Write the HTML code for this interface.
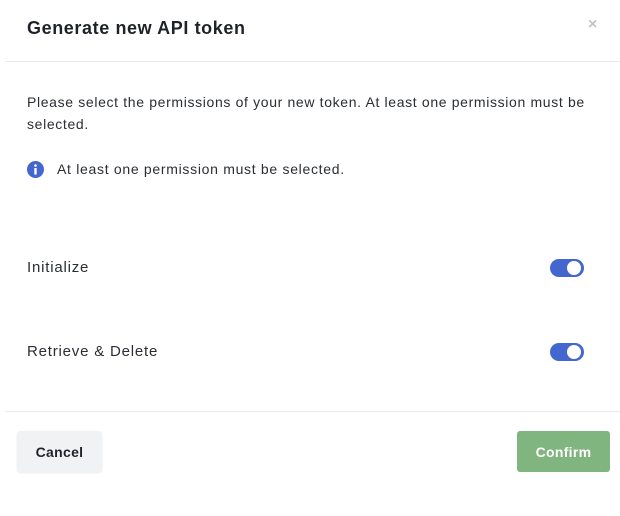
<!DOCTYPE html>
<html><head><style>
body{margin:0;width:620px;height:516px;background:#fff;font-family:"Liberation Sans",sans-serif;color:#212529;position:relative;overflow:hidden}
.a{position:absolute}
.t{left:27px;top:18px;font-size:18px;font-weight:bold;color:#1f2329;letter-spacing:0.6px}
.x{left:588px;top:16px;font-size:16px;color:#c4c4c4;font-weight:bold}
.hr{left:5px;right:0;height:1px;background:#e9e9e9}
.p{left:27px;top:91px;width:585px;font-size:14px;line-height:22px;color:#2a2e33;letter-spacing:0.65px}
.toggle{width:34px;height:18px;border-radius:9px;background:#4467cf;left:550px}
.toggle:after{content:"";position:absolute;right:3px;top:2px;width:14px;height:14px;border-radius:50%;background:#fff}
.lbl{left:27px;font-size:15px;color:#2a2e33;letter-spacing:0.8px}
.btn{top:431px;height:41px;border-radius:3px;font-size:14px;font-weight:bold;display:flex;align-items:center;justify-content:center;letter-spacing:0.3px}
</style></head><body>
<div class="a t">Generate new API token</div>
<div class="a x">×</div>
<div class="a hr" style="top:61px"></div>
<div class="a p">Please select the permissions of your new token. At least one permission must be selected.</div>
<svg class="a" style="left:27px;top:161px" width="17" height="17" viewBox="0 0 17 17"><circle cx="8.5" cy="8.5" r="8.5" fill="#4467cf"/><circle cx="8.5" cy="4.5" r="1.3" fill="#fff"/><rect x="7.3" y="7" width="2.4" height="6.5" fill="#fff"/></svg>
<div class="a" style="left:57px;top:161px;font-size:14px;color:#2a2e33;letter-spacing:0.7px">At least one permission must be selected.</div>
<div class="a lbl" style="top:259px">Initialize</div>
<div class="a toggle" style="top:259px"></div>
<div class="a lbl" style="top:343px">Retrieve &amp; Delete</div>
<div class="a toggle" style="top:343px"></div>
<div class="a hr" style="top:411px"></div>
<div class="a btn" style="left:17px;width:85px;background:#f1f2f4;color:#1f2329;box-shadow:0 1px 2px rgba(0,0,0,.08)">Cancel</div>
<div class="a btn" style="left:517px;width:93px;background:#80b57f;color:#fff">Confirm</div>
</body></html>
